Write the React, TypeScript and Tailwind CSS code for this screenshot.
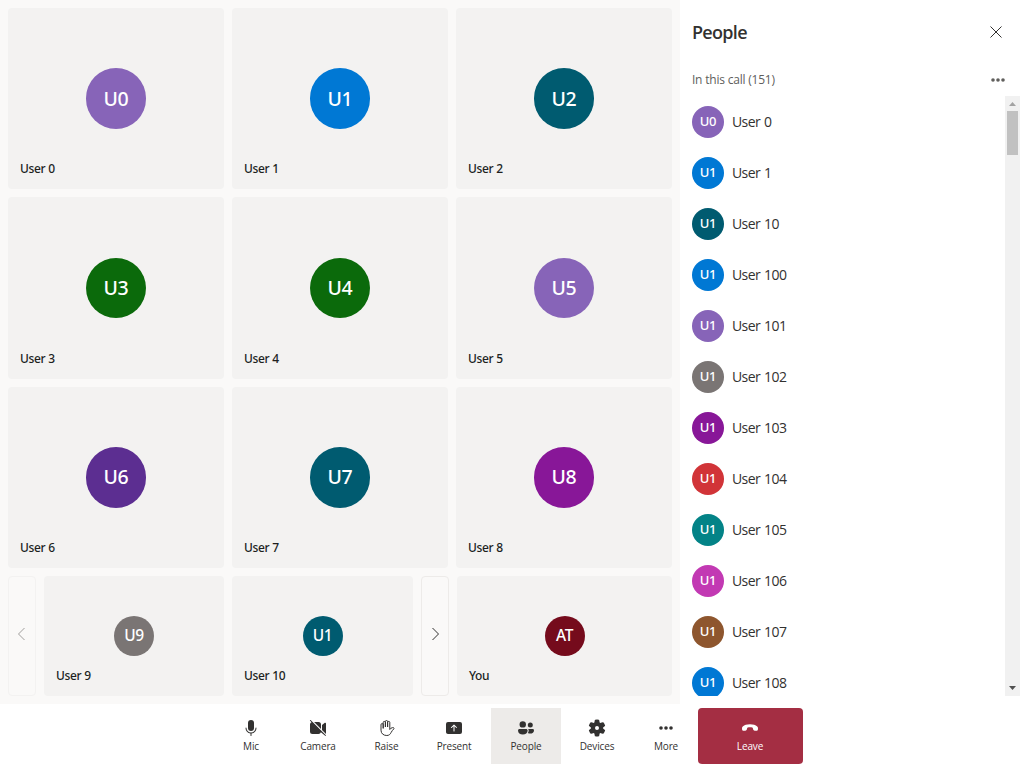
import React from "react";

const tiles = [
  ["User 0", "U0", "bg-[#8764b8]"],
  ["User 1", "U1", "bg-[#0078d4]"],
  ["User 2", "U2", "bg-[#005b70]"],
  ["User 3", "U3", "bg-[#0b6a0b]"],
  ["User 4", "U4", "bg-[#0b6a0b]"],
  ["User 5", "U5", "bg-[#8764b8]"],
  ["User 6", "U6", "bg-[#5c2e91]"],
  ["User 7", "U7", "bg-[#005b70]"],
  ["User 8", "U8", "bg-[#881798]"],
];

const people = [
  ["User 0", "U0", "bg-[#8764b8]"],
  ["User 1", "U1", "bg-[#0078d4]"],
  ["User 10", "U1", "bg-[#005b70]"],
  ["User 100", "U1", "bg-[#0078d4]"],
  ["User 101", "U1", "bg-[#8764b8]"],
  ["User 102", "U1", "bg-[#7a7574]"],
  ["User 103", "U1", "bg-[#881798]"],
  ["User 104", "U1", "bg-[#d13438]"],
  ["User 105", "U1", "bg-[#038387]"],
  ["User 106", "U1", "bg-[#c239b3]"],
  ["User 107", "U1", "bg-[#8e562e]"],
  ["User 108", "U1", "bg-[#0078d4]"],
];

function Tile({ name, initials, color, small = false }: { name: string; initials: string; color: string; small?: boolean }) {
  return (
    <div className="relative flex min-w-0 items-center justify-center rounded bg-[#f3f2f1] font-['Noto_Sans',sans-serif]">
      <div
        className={`flex items-center justify-center rounded-full font-medium text-white ${color} ${
          small ? "size-10 text-[15.5px] tracking-[-0.3px]" : "size-[60.4px] pb-px text-[19.5px] tracking-[-0.3px]"
        }`}
      >
        {initials}
      </div>
      <div className="absolute bottom-3 left-3 text-[12px] leading-4 font-medium tracking-[-0.4px] text-[#201f1e] [word-spacing:0.6px]">{name}</div>
    </div>
  );
}

function Icon({ children }: { children: React.ReactNode }) {
  return (
    <svg width="20" height="20" viewBox="0 0 20 20" fill="currentColor">
      {children}
    </svg>
  );
}

const MicIcon = () => (
  <Icon>
    <path d="M10 13a3 3 0 0 0 3-3V5a3 3 0 0 0-6 0v5a3 3 0 0 0 3 3Z" />
    <path d="M5 9.5c.28 0 .5.22.5.5a4.5 4.5 0 0 0 9 0 .5.5 0 0 1 1 0 5.5 5.5 0 0 1-5 5.48v2.02a.5.5 0 0 1-1 0v-2.02A5.5 5.5 0 0 1 4.5 10c0-.28.22-.5.5-.5Z" />
  </Icon>
);

const CameraOffIcon = () => (
  <Icon>
    <path d="M2.85 2.15a.5.5 0 1 0-.7.7l1.4 1.4A2.5 2.5 0 0 0 2 6.5v7A2.5 2.5 0 0 0 4.5 16h6a2.5 2.5 0 0 0 2.4-1.8l4.25 3.65a.5.5 0 0 0 .7-.7l-15-15Z" />
    <path d="M13 10.9V6.5A2.5 2.5 0 0 0 10.5 4H6.1l6.9 6.9Zm5 3.5V5.6c0-.75-.9-1.2-1.5-.7L14 6.9v5l4 4v-1.5Z" />
  </Icon>
);

const HandIcon = () => (
  <Icon>
    <path
      d="M6.7 10V4.5a1.1 1.1 0 0 1 2.2 0V9V3.6a1.1 1.1 0 0 1 2.2 0V9V4.5a1.1 1.1 0 0 1 2.2 0v7c.6-1 1.5-1.7 2.7-1.9.8-.1 1.3.1 1.5.5.1.3 0 .6-.2.8-1.1 1-1.9 2.2-2.7 3.6-.9 1.8-2 3-4.3 3-3.4 0-5.8-2-5.8-5.3V6.7a1.1 1.1 0 0 1 2.2 0V10"
      transform="translate(-.5 0)"
      fill="none"
      stroke="currentColor"
      strokeLinecap="round"
      strokeLinejoin="round"
    />
  </Icon>
);

const PresentIcon = () => (
  <Icon>
    <path
      fillRule="evenodd"
      d="M4 4a2 2 0 0 0-2 2v8c0 1.1.9 2 2 2h12a2 2 0 0 0 2-2V6a2 2 0 0 0-2-2H4Zm6.35 2.65 2.5 2.5a.5.5 0 0 1-.7.7L10.5 8.21v4.79a.5.5 0 0 1-1 0V8.21L7.85 9.85a.5.5 0 1 1-.7-.7l2.5-2.5a.5.5 0 0 1 .7 0Z"
    />
  </Icon>
);

const PeopleIcon = () => (
  <Icon>
    <circle cx="6.75" cy="6.4" r="3.2" />
    <path d="M3.5 11h6.6c.85 0 1.5.65 1.5 1.5 0 2.5-2 4-4.8 4s-4.8-1.5-4.8-4c0-.85.65-1.5 1.5-1.5Z" />
    <circle cx="14.3" cy="7.1" r="2.5" />
    <path d="M12.1 11h4.6c.75 0 1.3.6 1.3 1.4 0 1.9-1.5 3.1-3.9 3.1-.9 0-1.6-.15-2.2-.5.5-.7.8-1.6.8-2.5 0-.6-.2-1.1-.6-1.5Z" />
  </Icon>
);

const SettingsIcon = () => (
  <Icon>
    <path
      fillRule="evenodd"
      d="M1.91 7.38A8.5 8.5 0 0 1 3.69 4.3a.5.5 0 0 1 .54-.13l1.92.68a1 1 0 0 0 1.32-.76l.36-2a.5.5 0 0 1 .4-.4 8.53 8.53 0 0 1 3.55 0c.2.04.35.2.38.4l.37 2a1 1 0 0 0 1.32.76l1.92-.68a.5.5 0 0 1 .54.13 8.5 8.5 0 0 1 1.78 3.08c.06.2 0 .4-.15.54l-1.56 1.32a1 1 0 0 0 0 1.52l1.56 1.32a.5.5 0 0 1 .15.54 8.5 8.5 0 0 1-1.78 3.08.5.5 0 0 1-.54.13l-1.92-.68a1 1 0 0 0-1.32.76l-.37 2a.5.5 0 0 1-.38.4 8.53 8.53 0 0 1-3.56 0 .5.5 0 0 1-.39-.4l-.36-2a1 1 0 0 0-1.32-.76l-1.92.68a.5.5 0 0 1-.54-.13 8.5 8.5 0 0 1-1.78-3.08.5.5 0 0 1 .15-.54l1.56-1.32a1 1 0 0 0 0-1.52L2.06 7.92a.5.5 0 0 1-.15-.54ZM8 10a2 2 0 1 0 4 0 2 2 0 0 0-4 0Z"
    />
  </Icon>
);

const MoreIcon = () => (
  <Icon>
    <circle cx="5" cy="10" r="1.8" />
    <circle cx="10" cy="10" r="1.8" />
    <circle cx="15" cy="10" r="1.8" />
  </Icon>
);

const EndCallIcon = () => (
  <Icon>
    <path d="m18 10.9-.15.8c-.14.74-.85 1.22-1.64 1.14l-1.57-.17c-.68-.07-1.23-.57-1.43-1.25L12.7 9.8c-.85-.35-1.75-.48-2.7-.48-.96 0-1.9.15-2.7.48l-.5 1.62c-.2.68-.75 1.18-1.43 1.25l-1.58.17c-.78.08-1.5-.4-1.64-1.14L2 10.9c-.17-.9.1-1.8.75-2.42C4.35 6.95 6.8 6.2 10 6.2s5.65.75 7.25 2.28c.65.62.92 1.52.75 2.42Z" />
  </Icon>
);

const controls = [
  { label: "Mic", icon: MicIcon, box: "w-[60px]" },
  { label: "Camera", icon: CameraOffIcon, box: "w-[74px]" },
  { label: "Raise", icon: HandIcon, box: "w-[63px]" },
  { label: "Present", icon: PresentIcon, box: "w-[73px] pr-px" },
  { label: "People", icon: PeopleIcon, box: "w-[70px] bg-[#edebe9]" },
  { label: "Devices", icon: SettingsIcon, box: "w-[73px] pr-px" },
  { label: "More", icon: MoreIcon, box: "w-[64px]" },
  { label: "Leave", icon: EndCallIcon, box: "w-[105px] rounded-sm bg-[#a42e43] pr-px text-white" },
];

export default function App() {
  return (
    <div className="flex h-[768px] w-[1024px] flex-col overflow-hidden bg-white font-['Open_Sans','Noto_Sans',sans-serif] text-[#323130]">
      <div className="flex h-[704px]">
        <main className="flex w-[680px] flex-col gap-2 bg-[#faf9f8] p-2">
          <div className="grid flex-1 grid-cols-3 grid-rows-3 gap-2">
            {tiles.map(([name, initials, color]) => (
              <Tile key={name} name={name} initials={initials} color={color} />
            ))}
          </div>
          <div className="grid h-[120px] grid-cols-[28px_180px_181px_28px_215px] gap-2">
            <button className="flex items-center justify-center rounded border border-[#f3f2f1] text-[#a19f9d]" aria-label="Previous">
              <svg width="14" height="14" viewBox="0 0 14 14" fill="none" stroke="currentColor" className="mb-1 -ml-0.5">
                <path d="m10.5 1-6 6 6 6" />
              </svg>
            </button>
            <Tile name="User 9" initials="U9" color="bg-[#7a7574]" small />
            <Tile name="User 10" initials="U1" color="bg-[#005b70]" small />
            <button className="flex items-center justify-center rounded border border-[#edebe9] text-[#323130]" aria-label="Next">
              <svg width="14" height="14" viewBox="0 0 14 14" fill="none" stroke="currentColor" className="mb-1">
                <path d="m4.5 1 6 6-6 6" />
              </svg>
            </button>
            <Tile name="You" initials="AT" color="bg-[#750b1c]" small />
          </div>
        </main>

        <aside className="flex w-[344px] flex-col pb-2 pl-3">
          <header className="flex h-16 items-center justify-between pr-[22px]">
            <h2 className="pt-px text-[18px] font-semibold tracking-[-0.7px]">People</h2>
            <svg width="12" height="12" viewBox="0 0 12 12" stroke="currentColor" fill="none">
              <path d="m.5.5 11 11m0-11-11 11" />
            </svg>
          </header>
          <div className="flex h-8 items-center justify-between pr-4 text-[#605e5c]">
            <span className="text-[12px] tracking-[-0.25px] [word-spacing:0.2px]">In this call (151)</span>
            <MoreIcon />
          </div>
          <div className="flex min-h-0 flex-1 pr-1">
            <ul className="flex-1 overflow-hidden">
              {people.map(([name, initials, color]) => (
                <li key={name} className="flex h-[51px] items-start gap-2 pt-2.5">
                  <span className={`flex size-8 items-center justify-center rounded-full font-['Noto_Sans',sans-serif] text-[13px] font-medium tracking-[-0.3px] text-white ${color}`}>
                    {initials}
                  </span>
                  <span className="text-[14px] leading-8 tracking-[-0.6px] [word-spacing:1px]">{name}</span>
                </li>
              ))}
            </ul>
            <div className="flex w-[15px] flex-col items-center bg-[#f1f1f1]">
              <svg width="15" height="15" viewBox="0 0 15 15" fill="#a3a3a3">
                <path d="m4 10 3.5-4 3.5 4z" />
              </svg>
              <div className="h-11 w-[11px] bg-[#c1c1c1]" />
              <svg width="15" height="15" viewBox="0 0 15 15" fill="#505050" className="mt-auto">
                <path d="m4 5 3.5 4L11 5z" />
              </svg>
            </div>
          </div>
        </aside>
      </div>

      <nav className="flex h-16 justify-center py-1">
        {controls.map(({ label, icon: Glyph, box }) => (
          <button key={label} className={`flex flex-col items-center pt-2.5 ${box}`}>
            <Glyph />
            <span className="text-[10px] leading-4 tracking-[-0.15px]">{label}</span>
          </button>
        ))}
      </nav>
    </div>
  );
}
